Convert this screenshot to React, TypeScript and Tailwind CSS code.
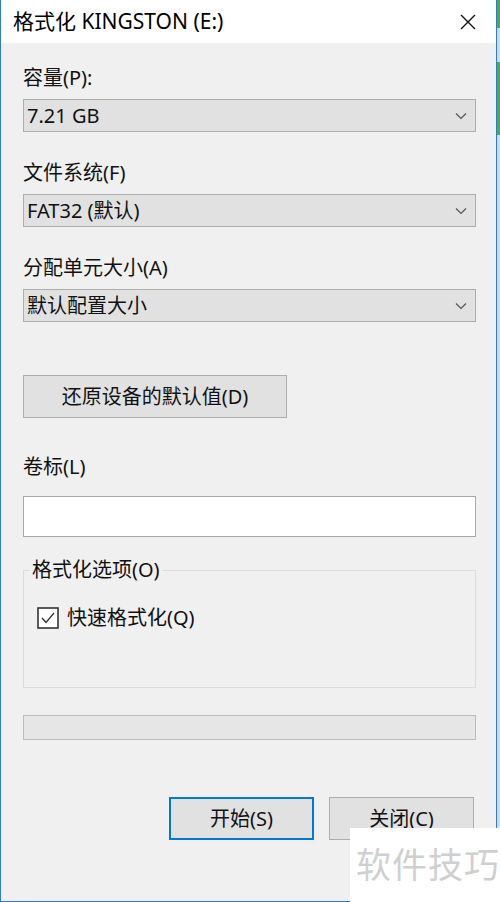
const font = { fontFamily: '"Noto Sans", "Noto Sans CJK SC", sans-serif' };

const Chevron = () => (
    <svg width="12" height="8" viewBox="0 0 12 8" className="shrink-0">
        <path d="M1 1.5 L6 6.5 L11 1.5" fill="none" stroke="#555" strokeWidth="1.2" />
    </svg>
)

const Select = ({ value }: { value: string }) => (
    <div className="h-[33px] flex items-center justify-between bg-[#e1e1e1] border border-[#adadad] pl-[3px] pr-[8px] text-[20px] text-[#111]">
        <span>{value}</span>
        <Chevron />
    </div>
)

const Label = ({ text, className = "" }: { text: string; className?: string }) => (
    <div className={"text-[20px] leading-[26px] text-[#111] " + className}>{text}</div>
)

export default function App() {
    return (
        <div className="flex w-[500px] h-[902px] bg-[#c9dcee]" style={font}>
            <div className="relative w-[497px] h-[902px] flex flex-col bg-[#f0f0f0] border-l border-r border-b border-[#2e7bd0]">
                {/* title bar */}
                <div className="h-[43px] shrink-0 bg-white flex items-center justify-between pl-[12px] pr-[20px]">
                    <span className="text-[21px] text-black">格式化 KINGSTON (E:)</span>
                    <svg width="16" height="16" viewBox="0 0 16 16">
                        <path d="M1 1 L15 15 M15 1 L1 15" stroke="#111" strokeWidth="1.4" />
                    </svg>
                </div>

                <div className="flex flex-col pl-[22px] pr-[20px]">
                    <Label text="容量(P):" className="mt-[22px] mb-[8px]" />
                    <Select value="7.21 GB" />

                    <Label text="文件系统(F)" className="mt-[28px] mb-[8px]" />
                    <Select value="FAT32 (默认)" />

                    <Label text="分配单元大小(A)" className="mt-[28px] mb-[8px]" />
                    <Select value="默认配置大小" />

                    <button className="mt-[53px] w-[264px] h-[43px] bg-[#e1e1e1] border border-[#adadad] text-[20px] text-[#111]">
                        还原设备的默认值(D)
                    </button>

                    <Label text="卷标(L)" className="mt-[36px] mb-[16px]" />
                    <input className="h-[41px] bg-white border border-[#a8a8a8] outline-none px-1" />

                    <fieldset className="mt-[20px] h-[131px] border border-[#dcdcdc] pl-[6px] pr-2 pt-[22px]">
                        <legend className="px-[2px] text-[20px] leading-[26px] text-[#111]">格式化选项(O)</legend>
                        <div className="flex items-center gap-[8px] pl-[7px]">
                            <svg width="22" height="22" viewBox="0 0 22 22">
                                <rect x="1" y="1" width="20" height="20" fill="#fff" stroke="#333" strokeWidth="1.6" />
                                <path d="M5 11 L9 15.5 L17 6" fill="none" stroke="#333" strokeWidth="1.3" />
                            </svg>
                            <span className="text-[20px] leading-[26px] text-[#111]">快速格式化(Q)</span>
                        </div>
                    </fieldset>

                    <div className="mt-[27px] h-[25px] bg-[#e6e6e6] border border-[#bcbcbc]" />

                    <div className="mt-[57px] flex justify-end gap-[15px] pr-[2px]">
                        <button className="w-[145px] h-[43px] bg-[#e1e1e1] border-2 border-[#0078d7] text-[20px] text-[#111]">
                            开始(S)
                        </button>
                        <button className="w-[145px] h-[43px] bg-[#e1e1e1] border border-[#adadad] text-[20px] text-[#111]">
                            关闭(C)
                        </button>
                    </div>
                </div>

                {/* watermark */}
                <div className="absolute left-[349px] top-[828px] w-[152px] h-[74px] bg-white flex items-center pl-[6px]">
                    <span className="text-[35px] text-[#d0d0d0] tracking-[1px]">软件技巧</span>
                </div>
            </div>
            <div className="w-[3px] flex flex-col">
                <div className="h-[28px] bg-[#52a84a]" />
                <div className="h-[34px] bg-[#c9dcee]" />
                <div className="h-[73px] bg-[#52a84a]" />
                <div className="flex-1 bg-[#c9dcee]" />
            </div>
        </div>
    )
}
